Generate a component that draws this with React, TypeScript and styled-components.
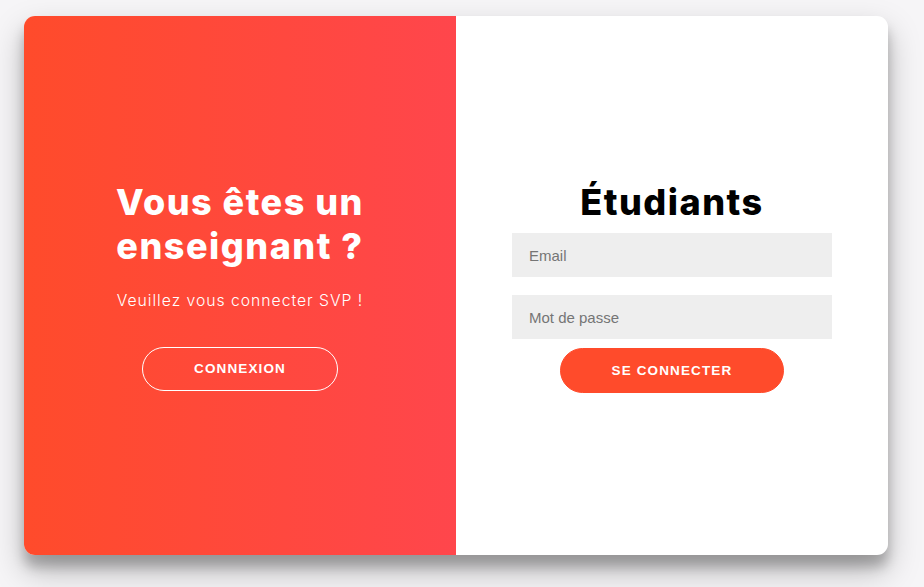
import React from "react";
import styled, { createGlobalStyle } from "styled-components";

const Global = createGlobalStyle`
  * { box-sizing: border-box; }
  html, body { margin: 0; padding: 0; background: #f6f5f7; }
  body { font-family: "Inter", "Liberation Sans", sans-serif; }
`;

const Page = styled.div`
  padding: 16px 0 0 24px;
  height: 587px;
`;

const Container = styled.div`
  width: 864px;
  height: 539px;
  border-radius: 11px;
  overflow: hidden;
  background: #fff;
  box-shadow: 0 15.75px 31.5px rgba(0, 0, 0, 0.25), 0 11.25px 11.25px rgba(0, 0, 0, 0.22);
  display: grid;
  grid-template-columns: 432px 432px;
`;

const OverlayPanel = styled.div`
  background: linear-gradient(to right, #ff4b2b, #ff464c);
  color: #fff;
  display: flex;
  flex-direction: column;
  align-items: center;
  justify-content: center;
  text-align: center;
  padding: 0 45px;
`;

const Title = styled.h1<{ $dark?: boolean }>`
  margin: 0;
  font-family: "Inter", sans-serif;
  font-weight: 800;
  font-size: 36px;
  line-height: 44px;
  letter-spacing: 1.5px;
  color: ${(p) => (p.$dark ? "#000" : "#fff")};
`;

const Text = styled.p`
  margin: 22.5px 0 33.75px;
  font-family: "Inter", sans-serif;
  font-weight: 300;
  font-size: 15.75px;
  line-height: 22.5px;
  letter-spacing: 0.97px;
`;

const Button = styled.button<{ $ghost?: boolean }>`
  font-family: "Liberation Sans", Arial, sans-serif;
  font-weight: bold;
  font-size: 13.5px;
  letter-spacing: 1.125px;
  text-transform: uppercase;
  color: #fff;
  border-radius: 22.5px;
  border: 1.125px solid ${(p) => (p.$ghost ? "#fff" : "#ff4b2b")};
  background: ${(p) => (p.$ghost ? "transparent" : "#ff4b2b")};
  padding: 13.5px 50.6px;
  line-height: 15.75px;
  cursor: pointer;
`;

const FormPanel = styled.form`
  display: flex;
  flex-direction: column;
  align-items: center;
  justify-content: center;
  text-align: center;
  padding: 2px 56px 0;
`;

const Input = styled.input`
  width: 100%;
  background: #eee;
  border: none;
  outline: none;
  margin: 9px 0;
  padding: 13.5px 17px;
  height: 44px;
  font-family: "Liberation Sans", Arial, sans-serif;
  font-size: 15px;
  color: #333;
  &::placeholder { color: #757575; }
`;

export default function App() {
  return (
    <>
      <Global />
      <Page>
        <Container>
          <OverlayPanel>
            <Title>Vous êtes un enseignant ?</Title>
            <Text>Veuillez vous connecter SVP !</Text>
            <Button $ghost type="button">Connexion</Button>
          </OverlayPanel>
          <FormPanel onSubmit={(e) => e.preventDefault()}>
            <Title $dark>Étudiants</Title>
            <Input type="email" placeholder="Email" />
            <Input type="password" placeholder="Mot de passe" />
            <Button type="submit">Se connecter</Button>
          </FormPanel>
        </Container>
      </Page>
    </>
  );
}
